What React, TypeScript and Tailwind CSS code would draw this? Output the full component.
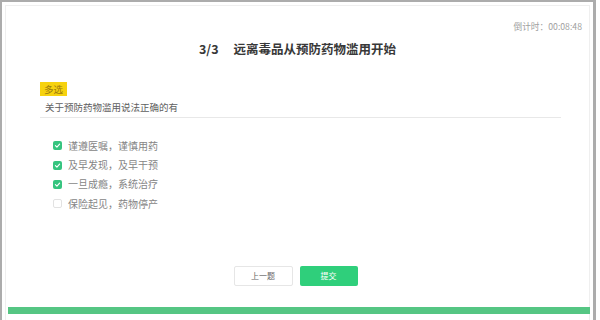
import React from "react";

const options = [
  { label: "谨遵医嘱，谨慎用药", checked: true },
  { label: "及早发现，及早干预", checked: true },
  { label: "一旦成瘾，系统治疗", checked: true },
  { label: "保险起见，药物停产", checked: false },
];

function Check({ checked }: { checked: boolean }) {
  if (!checked) {
    return <span className="w-[9px] h-[9px] rounded-[2px] border border-[#e2e2e2] bg-white shrink-0" />;
  }
  return (
    <span className="w-[9px] h-[9px] rounded-[2px] bg-[#36c47f] shrink-0 flex items-center justify-center">
      <svg width="7" height="7" viewBox="0 0 10 10">
        <path d="M2 5.2 L4.2 7.3 L8 3" fill="none" stroke="#ffffff" strokeWidth="1.6" strokeLinecap="round" strokeLinejoin="round" />
      </svg>
    </span>
  );
}

export default function App() {
  return (
    <div
      className="w-[600px] h-[320px] bg-white overflow-hidden"
      style={{ fontFamily: '"Noto Sans CJK SC", "Noto Sans", sans-serif' }}
    >
      <div className="w-[596px] h-[330px] border-l-2 border-t-2 border-r-[3px] border-[#acacac] pt-[3px] pl-[3px] pr-[3px]">
        <div className="h-full border border-[#efefef] flex flex-col">
          <div className="mt-[15px] pr-[7px] flex justify-end text-[8.7px] leading-[12px] text-[#a0a0a0]">
            倒计时：00:08:48
          </div>
          <div className="mt-[7px] flex justify-center text-[12.5px] leading-[18px] font-bold text-[#383838]">
            <span>3/3</span>
            <span className="ml-[15px]">远离毒品从预防药物滥用开始</span>
          </div>
          <div className="pl-[34px] pr-[28px]">
            <div className="mt-[24px] flex">
              <span className="h-[14px] px-[4px] bg-[#f6d20f] text-[9.5px] leading-[14px] text-[#9a7a10]">多选</span>
            </div>
            <div className="mt-[5px] ml-[5px] text-[9.5px] leading-[12px] text-[#606060]">关于预防药物滥用说法正确的有</div>
            <div className="mt-[4px] h-px bg-[#e8e8e8]" />
            <div className="mt-[18px] pl-[13px] flex flex-col">
              {options.map((o) => (
                <div key={o.label} className="h-[19.4px] flex items-center gap-[6px]">
                  <Check checked={o.checked} />
                  <span className="text-[10px] leading-[12px] text-[#858585]">{o.label}</span>
                </div>
              ))}
            </div>
          </div>
          <div className="mt-[52px] flex justify-center gap-[7px] pr-[4px]">
            <button className="w-[59px] h-[20px] border border-[#e6e6e6] rounded-[2px] bg-white text-[8px] text-[#666666]">上一题</button>
            <button className="w-[58px] h-[20px] rounded-[2px] bg-[#2fcf7b] text-[8px] text-white">提交</button>
          </div>
          <div className="mt-[21px] ml-[2px] mr-[-1px] h-[7px] bg-[#55c683]" />
        </div>
      </div>
    </div>
  );
}
